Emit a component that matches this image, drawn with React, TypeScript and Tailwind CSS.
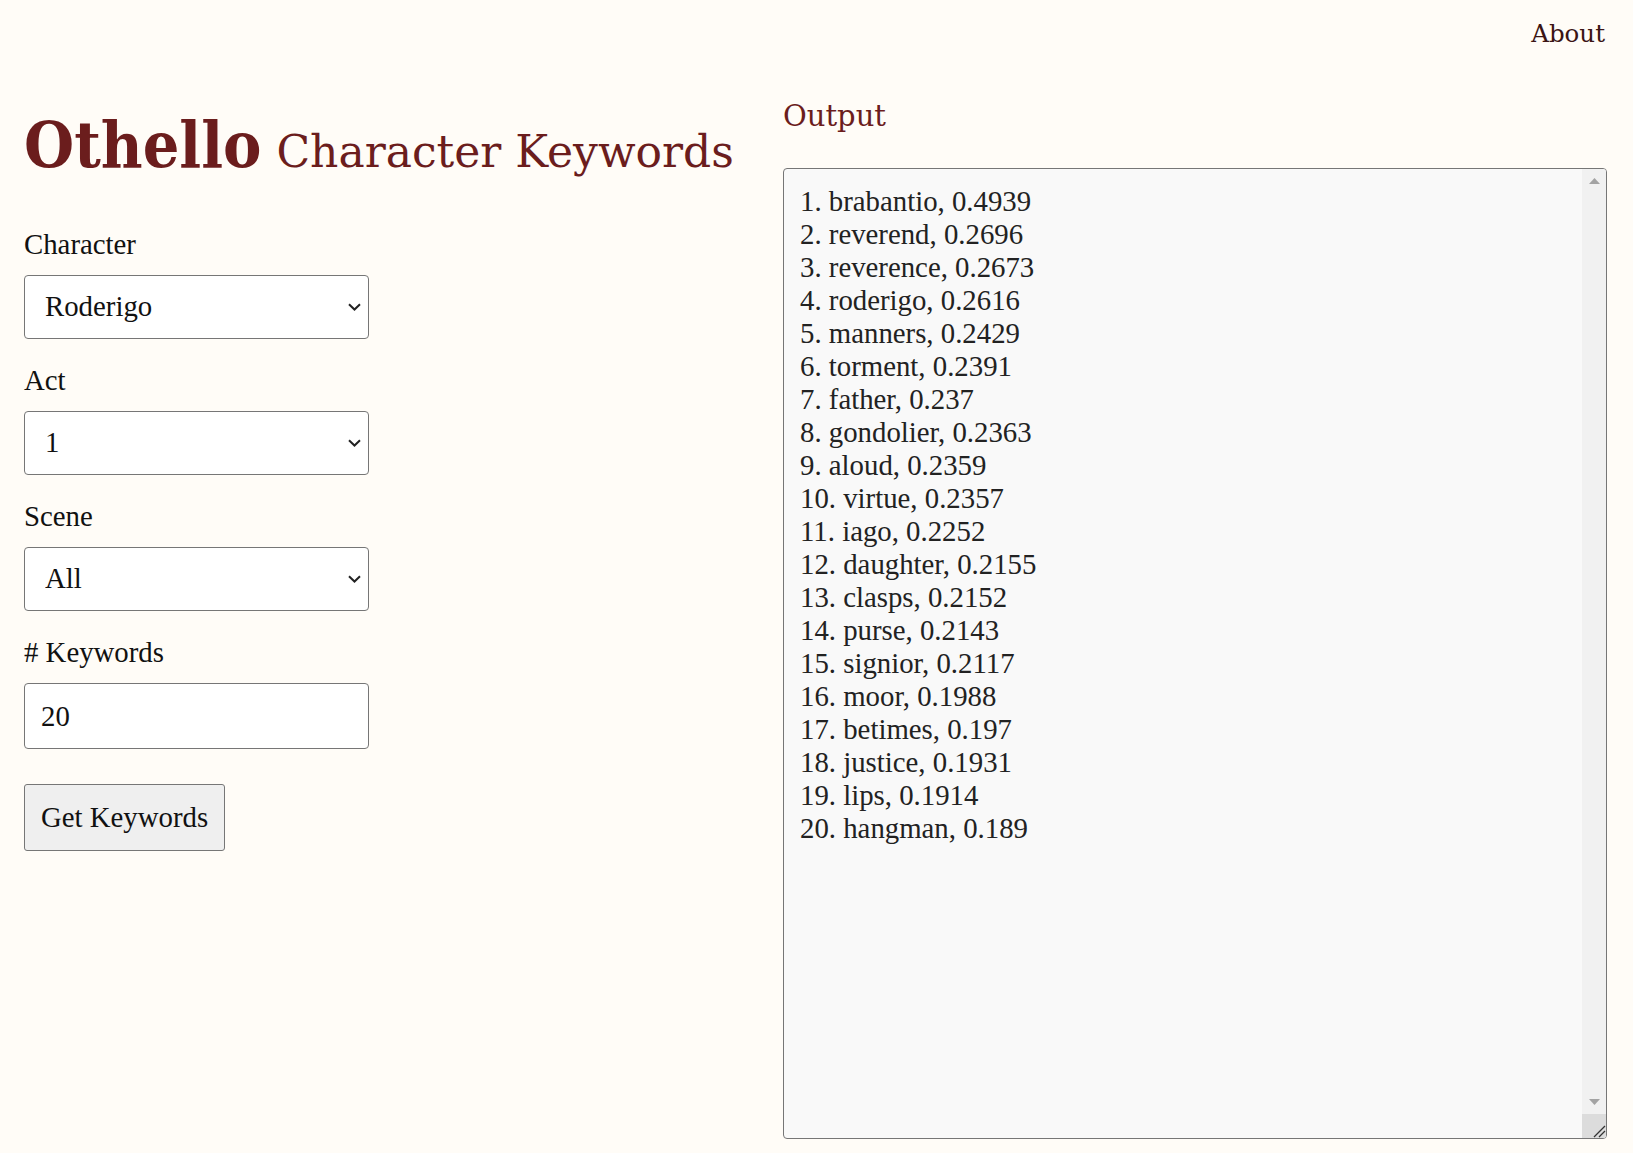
import React from "react";

const keywords: [string, string][] = [
  ["brabantio", "0.4939"],
  ["reverend", "0.2696"],
  ["reverence", "0.2673"],
  ["roderigo", "0.2616"],
  ["manners", "0.2429"],
  ["torment", "0.2391"],
  ["father", "0.237"],
  ["gondolier", "0.2363"],
  ["aloud", "0.2359"],
  ["virtue", "0.2357"],
  ["iago", "0.2252"],
  ["daughter", "0.2155"],
  ["clasps", "0.2152"],
  ["purse", "0.2143"],
  ["signior", "0.2117"],
  ["moor", "0.1988"],
  ["betimes", "0.197"],
  ["justice", "0.1931"],
  ["lips", "0.1914"],
  ["hangman", "0.189"],
];

const output = keywords.map(([w, s], i) => `${i + 1}. ${w}, ${s}`).join("\n");

function Field({ label, children }: { label: string; children: React.ReactNode }) {
  return (
    <div className="flex flex-col">
      <label className="leading-[33px] mb-[14px]">{label}</label>
      {children}
    </div>
  );
}

function Select({ value, options }: { value: string; options: string[] }) {
  return (
    <div className="relative w-[345px]">
      <select
        defaultValue={value}
        className="appearance-none w-full h-[64px] pl-[20px] pr-10 bg-white border border-[#767676] rounded-[4px] text-[#111] outline-none"
      >
        {options.map((o) => (
          <option key={o}>{o}</option>
        ))}
      </select>
      <svg
        className="absolute right-[8px] top-[28px] pointer-events-none"
        width="13"
        height="8"
        viewBox="0 0 13 8"
        fill="none"
        stroke="#222"
        strokeWidth="2"
      >
        <path d="M1 1.2 L6.5 6.5 L12 1.2" />
      </svg>
    </div>
  );
}

function Triangle({ up }: { up?: boolean }) {
  return (
    <svg width="11" height="6" viewBox="0 0 11 6" fill="#a3a3a3">
      <path d={up ? "M0 6 L5.5 0 L11 6 Z" : "M0 0 L5.5 6 L11 0 Z"} />
    </svg>
  );
}

export default function App() {
  return (
    <div className="min-h-screen bg-[#fffcf7] text-[#111] text-[28.8px] font-['Liberation_Serif','Times_New_Roman',serif]">
      <nav className="flex justify-end px-7 pt-[16px] h-[58px]">
        <a href="#" className="font-['DejaVu_Serif',serif] text-[24.5px] leading-[36px] text-[#3b1414]">
          About
        </a>
      </nav>
      <main className="grid grid-cols-[759px_1fr] pl-6 pr-[26px]">
        <section className="flex flex-col">
          <h1 className="mt-[55px] mb-[51px] text-[#6b1d1d] leading-none whitespace-nowrap">
            <span className="text-[64px] font-bold font-['DejaVu_Serif_Condensed','DejaVu_Serif',serif]">Othello</span>
            <span className="ml-[15px] text-[44px] font-['DejaVu_Serif',serif]">Character Keywords</span>
          </h1>
          <div className="flex flex-col gap-[25px]">
            <Field label="Character">
              <Select value="Roderigo" options={["Othello", "Iago", "Desdemona", "Cassio", "Roderigo", "Emilia", "Brabantio"]} />
            </Field>
            <Field label="Act">
              <Select value="1" options={["All", "1", "2", "3", "4", "5"]} />
            </Field>
            <Field label="Scene">
              <Select value="All" options={["All", "1", "2", "3"]} />
            </Field>
            <Field label="# Keywords">
              <input
                type="text"
                defaultValue="20"
                className="w-[345px] h-[66px] px-[16px] bg-white border border-[#767676] rounded-[4px] outline-none"
              />
            </Field>
          </div>
          <button className="mt-[35px] self-start h-[67px] px-[16px] bg-[#efefef] border border-[#767676] rounded-[3px] text-[#111]">
            Get Keywords
          </button>
        </section>
        <section className="flex flex-col">
          <h2 className="mt-[38px] mb-[32px] text-[29px] leading-[40px] text-[#6b1d1d] font-['DejaVu_Serif',serif]">
            Output
          </h2>
          <div className="flex h-[971px] bg-[#f9f9f9] border border-[#767676] rounded-[4px] overflow-hidden">
            <textarea
              readOnly
              value={output}
              className="flex-1 p-[16px] bg-transparent leading-[33px] text-[#222] overflow-hidden resize-none outline-none"
            />
            <div className="w-[24px] flex flex-col bg-[#f1f1f1]">
              <div className="h-[24px] flex items-center justify-center">
                <Triangle up />
              </div>
              <div className="flex-1" />
              <div className="h-[24px] flex items-center justify-center">
                <Triangle />
              </div>
              <div className="h-[24px] bg-[#dcdcdc] flex items-end justify-end">
                <svg width="14" height="14" viewBox="0 0 14 14" stroke="#333" strokeWidth="1.3">
                  <path d="M2 13 L13 2 M7 13 L13 7" />
                </svg>
              </div>
            </div>
          </div>
        </section>
      </main>
    </div>
  );
}
